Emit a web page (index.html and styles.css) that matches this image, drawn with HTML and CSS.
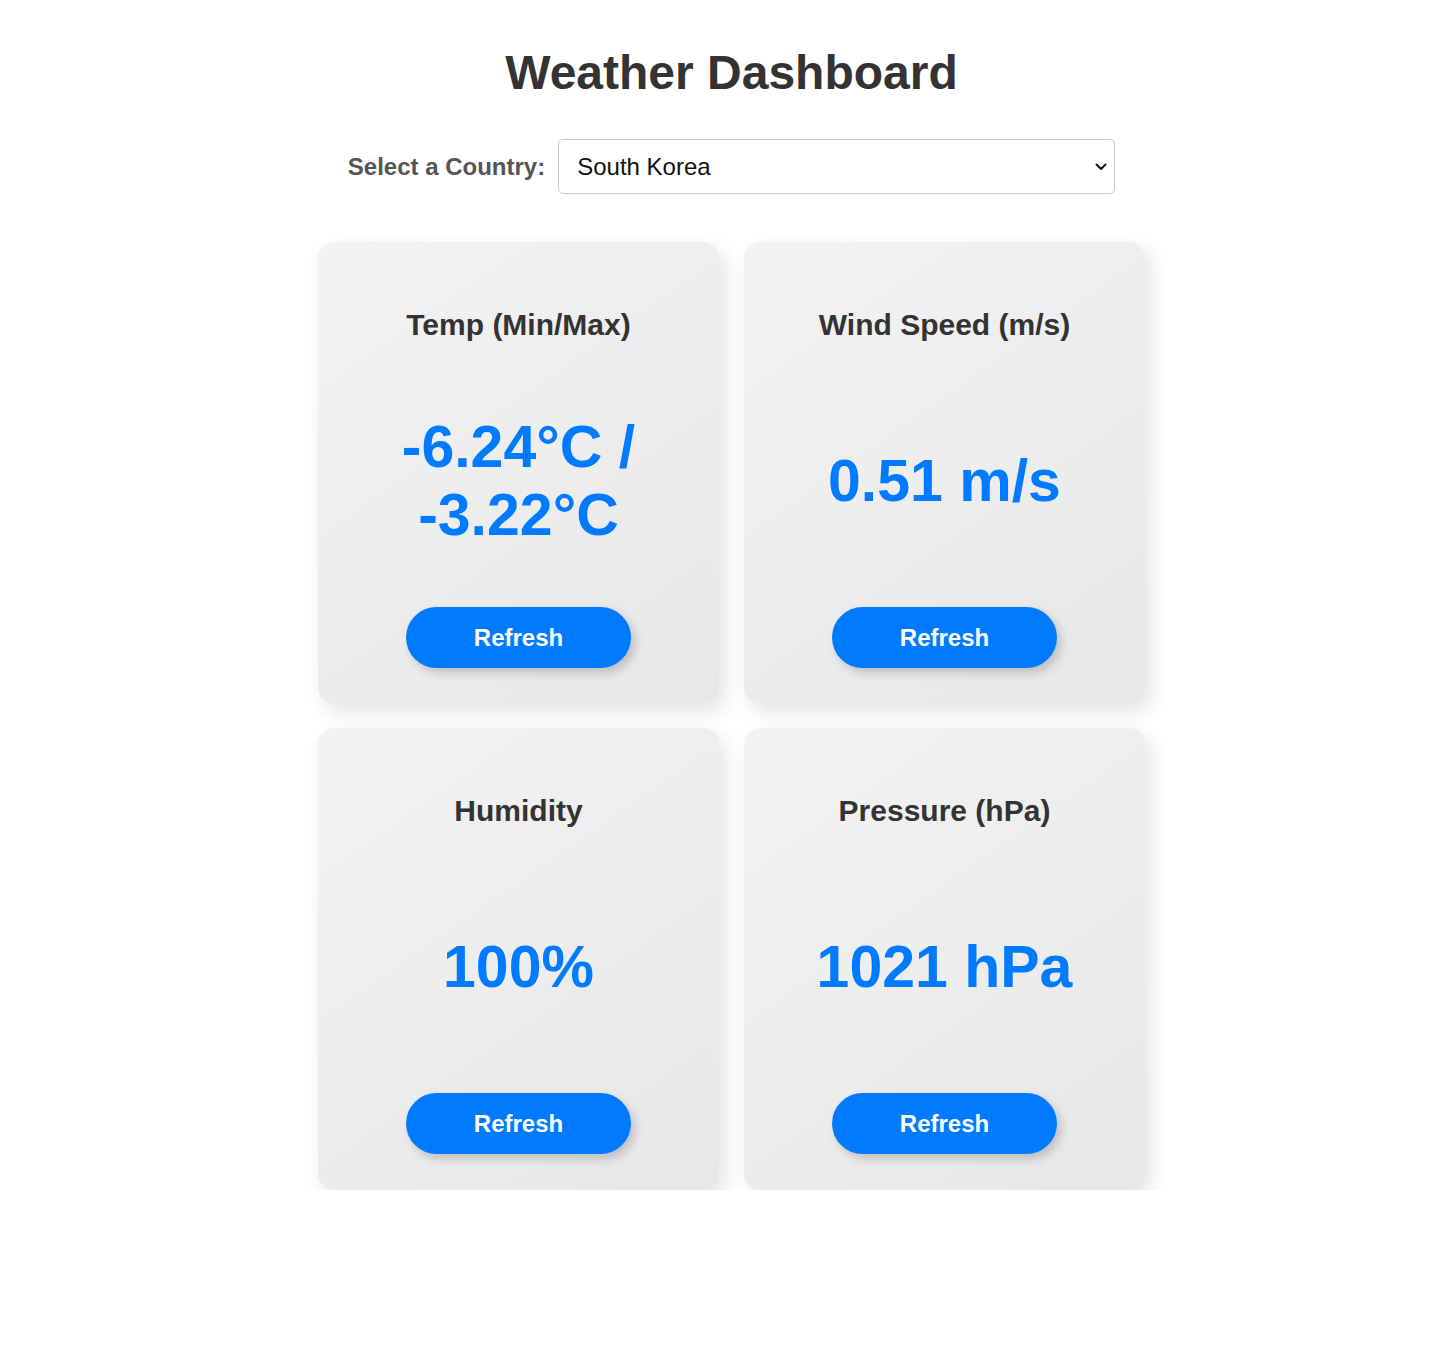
FILE: index.html
```html
<!DOCTYPE html>
<html lang="en">
<head>
<meta charset="utf-8">
<title>Weather Dashboard</title>
<link rel="stylesheet" href="styles.css">
</head>
<body>
<main class="page">
  <h1 class="title">Weather Dashboard</h1>
  <div class="picker">
    <label class="picker-label" for="country">Select a Country:</label>
    <div class="select-wrap">
      <select id="country" class="picker-select">
        <option>South Korea</option>
      </select>
      <svg class="chevron" width="12" height="8" viewBox="0 0 12 8"><path d="M1.5 1.5 L6 6 L10.5 1.5" fill="none" stroke="#111" stroke-width="2" stroke-linecap="round" stroke-linejoin="round"/></svg>
    </div>
  </div>
  <section class="grid">
    <div class="card">
      <h3 class="card-title">Temp (Min/Max)</h3>
      <div class="card-value"><p>-6.24°C / -3.22°C</p></div>
      <button class="refresh">Refresh</button>
    </div>
    <div class="card">
      <h3 class="card-title">Wind Speed (m/s)</h3>
      <div class="card-value"><p>0.51 m/s</p></div>
      <button class="refresh">Refresh</button>
    </div>
    <div class="card">
      <h3 class="card-title">Humidity</h3>
      <div class="card-value"><p>100%</p></div>
      <button class="refresh">Refresh</button>
    </div>
    <div class="card">
      <h3 class="card-title">Pressure (hPa)</h3>
      <div class="card-value"><p>1021 hPa</p></div>
      <button class="refresh">Refresh</button>
    </div>
  </section>
</main>
</body>
</html>
```

FILE: styles.css
```css
* { box-sizing: border-box; }

html, body {
  margin: 0;
  padding: 0;
  background: #ffffff;
}

body {
  font-family: "Liberation Sans", Arial, sans-serif;
  color: #333;
  padding-left: 8px;
}

.page {
  display: flex;
  flex-direction: column;
  align-items: center;
  padding-top: 43px;
}

.title {
  margin: 0;
  font-size: 48px;
  line-height: 60px;
  font-weight: 700;
  color: #333;
}

.picker {
  display: flex;
  align-items: center;
  gap: 13px;
  margin-top: 36px;
}

.picker-label {
  font-size: 24px;
  font-weight: 700;
  color: #555;
}

.select-wrap {
  position: relative;
  width: 557px;
  height: 55px;
}

.picker-select {
  appearance: none;
  -webkit-appearance: none;
  width: 100%;
  height: 100%;
  border: 1px solid #c8c8c8;
  border-radius: 5px;
  background: #fff;
  padding: 0 40px 0 18px;
  font-family: "Liberation Sans", Arial, sans-serif;
  font-size: 24px;
  color: #111;
}

.chevron {
  position: absolute;
  right: 8px;
  top: 24px;
  pointer-events: none;
}

.grid {
  display: grid;
  grid-template-columns: 401px 401px;
  grid-auto-rows: 462px;
  column-gap: 25px;
  row-gap: 24px;
  margin-top: 48px;
}

.card {
  display: flex;
  flex-direction: column;
  align-items: center;
  padding: 66px 20px 36px;
  border-radius: 16px;
  background: linear-gradient(145deg, #f3f3f3 0%, #e7e7e7 100%);
  box-shadow: 6px 8px 20px rgba(0, 0, 0, 0.11), -4px -2px 12px rgba(255, 255, 255, 0.7);
}

.card-title {
  margin: 0;
  font-size: 30px;
  line-height: 34px;
  font-weight: 700;
  color: #333;
  text-align: center;
}

.card-value {
  flex: 1;
  display: flex;
  align-items: center;
  justify-content: center;
  margin-top: 13px;
  text-align: center;
}

.card-value p {
  margin: 0;
  font-size: 59px;
  line-height: 68px;
  font-weight: 700;
  color: #007bff;
}

.refresh {
  width: 225px;
  height: 61px;
  border: none;
  border-radius: 31px;
  background: #007bff;
  color: #fff;
  font-family: "Liberation Sans", Arial, sans-serif;
  font-size: 24px;
  font-weight: 700;
  box-shadow: 4px 5px 10px rgba(0, 0, 0, 0.18);
  cursor: pointer;
}
```
